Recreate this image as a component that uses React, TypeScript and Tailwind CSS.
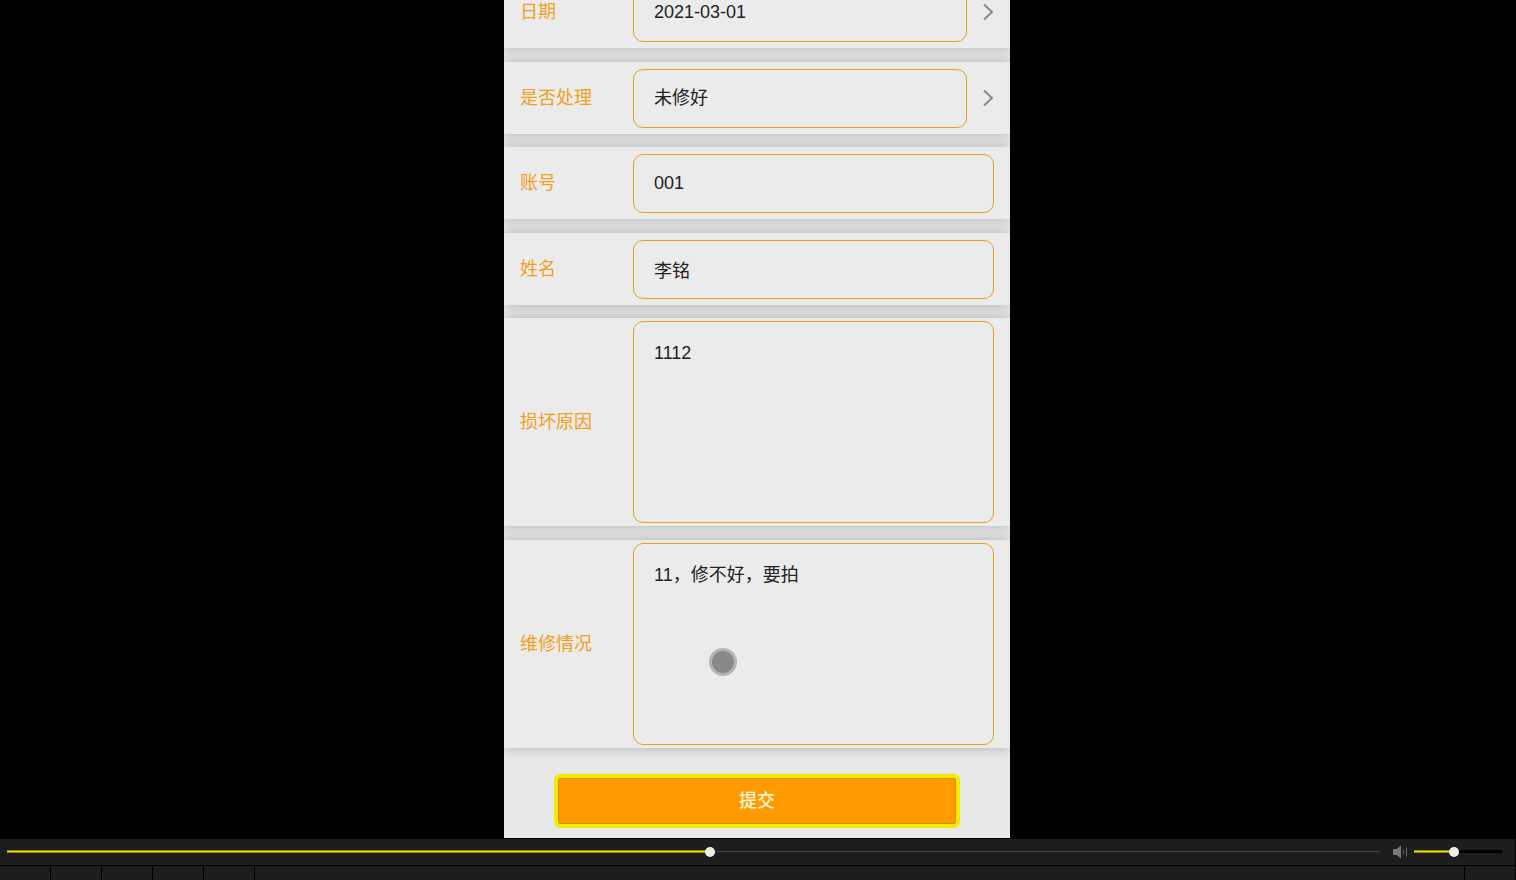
import React, { FC, useState } from "react";

interface RowProps {
  id: string;
  label: string;
  children: React.ReactNode;
}

const fieldClass =
  "block w-full min-w-0 flex-1 appearance-none rounded-[10px] border border-[#e8a020] bg-transparent px-5 text-lg text-[#222] outline-none";

const Row: FC<RowProps> = ({ id, label, children }) => (
  <div className="flex shrink-0 items-center bg-[#ebebeb] px-4 shadow-[0_0_12px_rgba(0,0,0,0.24)] odd:mb-[14px] even:mb-[13px] last:mb-0!">
    <label htmlFor={id} className="w-[113px] shrink-0 text-lg text-[#f0a01c]">
      {label}
    </label>
    {children}
  </div>
);

const Chevron: FC = () => (
  <svg
    className="mr-[-1px] ml-3.5 h-5 w-3.5 shrink-0"
    viewBox="0 0 14 20"
    fill="none"
    stroke="#7f8c92"
    strokeWidth="2"
  >
    <path d="M3 2.5 11 10 3 17.5" />
  </svg>
);

interface TrackProps {
  label: string;
  initial: number;
  railClass: string;
}

const Track: FC<TrackProps> = ({ label, initial, railClass }) => {
  const [value, setValue] = useState(initial);
  return (
    <div className="relative flex h-[25px] w-full items-center">
      <div className={`w-full ${railClass}`} />
      <div
        className="absolute left-0 h-[3px] border-y border-[#978500] bg-[#f8dc00]"
        style={{ width: `${value / 10}%` }}
      />
      <input
        type="range"
        aria-label={label}
        min={0}
        max={1000}
        value={value}
        onChange={(e) => setValue(Number(e.target.value))}
        className="absolute inset-0 m-0 h-full w-full cursor-pointer appearance-none bg-transparent outline-none [&::-webkit-slider-thumb]:size-2.5 [&::-webkit-slider-thumb]:appearance-none [&::-webkit-slider-thumb]:rounded-full [&::-webkit-slider-thumb]:bg-[#ededed]"
      />
    </div>
  );
};

const RepairForm: FC = () => {
  const [date, setDate] = useState("2021-03-01");
  const [status, setStatus] = useState("未修好");
  const [account, setAccount] = useState("001");
  const [name, setName] = useState("李铭");
  const [reason, setReason] = useState("1112");
  const [result, setResult] = useState("11，修不好，要拍");

  return (
    <form
      className="relative flex h-full w-[506px] max-w-full flex-col justify-end overflow-hidden bg-[#e8e8e8]"
      onSubmit={(e) => e.preventDefault()}
    >
      <div className="flex shrink-0 flex-col">
        <Row id="date" label="日期">
          <div className="flex h-[72px] flex-1 items-center">
            <input
              id="date"
              className={`${fieldClass} h-[59px]`}
              value={date}
              onChange={(e) => setDate(e.target.value)}
            />
            <Chevron />
          </div>
        </Row>
        <Row id="status" label="是否处理">
          <div className="flex h-[72px] flex-1 items-center">
            <select
              id="status"
              className={`${fieldClass} h-[59px]`}
              value={status}
              onChange={(e) => setStatus(e.target.value)}
            >
              <option>未修好</option>
            </select>
            <Chevron />
          </div>
        </Row>
        <Row id="account" label="账号">
          <div className="flex h-[72px] flex-1 items-center">
            <input
              id="account"
              className={`${fieldClass} h-[59px]`}
              value={account}
              onChange={(e) => setAccount(e.target.value)}
            />
          </div>
        </Row>
        <Row id="name" label="姓名">
          <div className="flex h-[72px] flex-1 items-center">
            <input
              id="name"
              className={`${fieldClass} h-[59px]`}
              value={name}
              onChange={(e) => setName(e.target.value)}
            />
          </div>
        </Row>
        <Row id="reason" label="损坏原因">
          <div className="flex h-[208px] flex-1 items-center">
            <textarea
              id="reason"
              className={`${fieldClass} h-[202px] resize-none py-[17px]`}
              value={reason}
              onChange={(e) => setReason(e.target.value)}
            />
          </div>
        </Row>
        <Row id="result" label="维修情况">
          <div className="flex h-[208px] flex-1 items-center">
            <textarea
              id="result"
              className={`${fieldClass} h-[202px] resize-none py-[17px]`}
              value={result}
              onChange={(e) => setResult(e.target.value)}
            />
          </div>
        </Row>
      </div>
      <div className="shrink-0 px-[50px] pt-[26px] pb-2.5">
        <button
          type="submit"
          className="flex h-[54px] w-full items-center justify-center rounded-md border-4 border-[#f0ec00] bg-[#ff9a00] text-lg font-medium text-[#fff6dc] shadow-[inset_0_0_0_1px_#dc8a00]"
        >
          提交
        </button>
      </div>
      {/* touch pointer */}
      <div className="absolute bottom-[162px] left-[205px] size-7 rounded-full border-3 border-[#b4b4b4] bg-[#888]" />
    </form>
  );
};

const PlayerBar: FC = () => (
  <footer className="shrink-0 bg-black pt-px pr-px">
    <div className="flex h-[26px] items-start bg-[#1d1d1d] pr-[13px] pl-[7px]">
      <div className="flex-1">
        <Track label="播放进度" initial={512} railClass="h-px bg-[#444]" />
      </div>
      <button
        type="button"
        aria-label="静音"
        className="mr-1.5 ml-3 flex h-[25px] shrink-0 items-center"
      >
        <svg className="h-3.5 w-4" viewBox="0 0 16 14">
          <path d="M1 4h3.5L9 0.5v13L4.5 10H1z" fill="#777" />
          <path d="M11.5 4.5v5" stroke="#555" />
          <path d="M14.5 2.5v9" stroke="#666" />
        </svg>
      </button>
      <div className="w-[88px]">
        <Track label="音量" initial={443} railClass="h-[3px] bg-black" />
      </div>
    </div>
    <div className="mt-px flex h-3.5">
      {["停止", "上一个", "播放", "下一个", "打开"].map((name) => (
        <button
          key={name}
          type="button"
          aria-label={name}
          className="w-[51px] border-r border-black bg-[#1d1d1d]"
        />
      ))}
      <div className="flex-1 bg-[#1d1d1d]" />
      <button
        type="button"
        aria-label="全屏"
        className="w-[51px] border-l border-black bg-[#1d1d1d]"
      />
    </div>
  </footer>
);

const App: FC = () => {
  return (
    <div className="flex h-screen flex-col overflow-hidden bg-black font-['Liberation_Sans','Noto_Sans_CJK_SC',sans-serif]">
      <main className="flex min-h-0 flex-1 justify-center pr-0.5">
        <RepairForm />
      </main>
      <PlayerBar />
    </div>
  );
};

export default App;
